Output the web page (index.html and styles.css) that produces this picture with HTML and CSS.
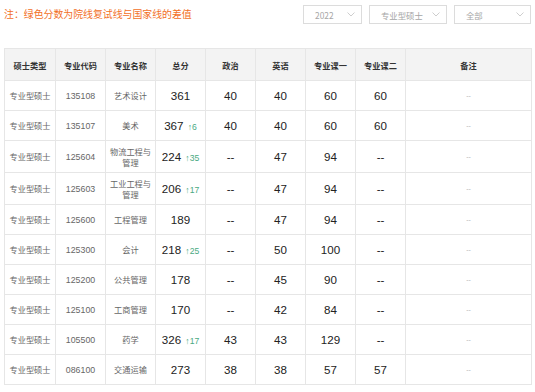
FILE: index.html
```html
<!DOCTYPE html>
<html lang="zh-CN">
<head>
  <meta charset="UTF-8" />
  <title>复试分数线</title>
  <link rel="stylesheet" href="styles.css">
</head>
<body>
  <div class="page">
    <div class="toolbar">
      <p class="note">注：绿色分数为院线复试线与国家线的差值</p>
      <div class="filters">
        <div class="select select-year">
          <span>2022</span>
          <svg class="arrow" width="8" height="5" viewBox="0 0 8 5"><polyline points="0.5,0.5 4,4 7.5,0.5" fill="none" stroke="#c8c8c8" stroke-width="0.9"/></svg>
        </div>
        <div class="select select-type">
          <span>专业型硕士</span>
          <svg class="arrow" width="8" height="5" viewBox="0 0 8 5"><polyline points="0.5,0.5 4,4 7.5,0.5" fill="none" stroke="#c8c8c8" stroke-width="0.9"/></svg>
        </div>
        <div class="select select-all">
          <span>全部</span>
          <svg class="arrow" width="8" height="5" viewBox="0 0 8 5"><polyline points="0.5,0.5 4,4 7.5,0.5" fill="none" stroke="#c8c8c8" stroke-width="0.9"/></svg>
        </div>
      </div>
    </div>

    <table class="score-table">
      <colgroup>
        <col class="c-type"><col><col><col><col><col><col><col><col class="c-remark">
      </colgroup>
      <thead>
        <tr>
          <th>硕士类型</th>
          <th>专业代码</th>
          <th>专业名称</th>
          <th>总分</th>
          <th>政治</th>
          <th>英语</th>
          <th>专业课一</th>
          <th>专业课二</th>
          <th>备注</th>
        </tr>
      </thead>
      <tbody>
        <tr>
          <td class="txt">专业型硕士</td><td class="code">135108</td><td class="txt">艺术设计</td>
          <td class="num">361</td><td class="num">40</td><td class="num">40</td><td class="num">60</td><td class="num">60</td><td class="remark">--</td>
        </tr>
        <tr>
          <td class="txt">专业型硕士</td><td class="code">135107</td><td class="txt">美术</td>
          <td class="num">367 <span class="diff">↑6</span></td><td class="num">40</td><td class="num">40</td><td class="num">60</td><td class="num">60</td><td class="remark">--</td>
        </tr>
        <tr class="tall">
          <td class="txt">专业型硕士</td><td class="code">125604</td><td class="txt">物流工程与管理</td>
          <td class="num">224 <span class="diff">↑35</span></td><td class="num">--</td><td class="num">47</td><td class="num">94</td><td class="num">--</td><td class="remark">--</td>
        </tr>
        <tr class="tall">
          <td class="txt">专业型硕士</td><td class="code">125603</td><td class="txt">工业工程与管理</td>
          <td class="num">206 <span class="diff">↑17</span></td><td class="num">--</td><td class="num">47</td><td class="num">94</td><td class="num">--</td><td class="remark">--</td>
        </tr>
        <tr>
          <td class="txt">专业型硕士</td><td class="code">125600</td><td class="txt">工程管理</td>
          <td class="num">189</td><td class="num">--</td><td class="num">47</td><td class="num">94</td><td class="num">--</td><td class="remark">--</td>
        </tr>
        <tr>
          <td class="txt">专业型硕士</td><td class="code">125300</td><td class="txt">会计</td>
          <td class="num">218 <span class="diff">↑25</span></td><td class="num">--</td><td class="num">50</td><td class="num">100</td><td class="num">--</td><td class="remark">--</td>
        </tr>
        <tr>
          <td class="txt">专业型硕士</td><td class="code">125200</td><td class="txt">公共管理</td>
          <td class="num">178</td><td class="num">--</td><td class="num">45</td><td class="num">90</td><td class="num">--</td><td class="remark">--</td>
        </tr>
        <tr>
          <td class="txt">专业型硕士</td><td class="code">125100</td><td class="txt">工商管理</td>
          <td class="num">170</td><td class="num">--</td><td class="num">42</td><td class="num">84</td><td class="num">--</td><td class="remark">--</td>
        </tr>
        <tr>
          <td class="txt">专业型硕士</td><td class="code">105500</td><td class="txt">药学</td>
          <td class="num">326 <span class="diff">↑17</span></td><td class="num">43</td><td class="num">43</td><td class="num">129</td><td class="num">--</td><td class="remark">--</td>
        </tr>
        <tr>
          <td class="txt">专业型硕士</td><td class="code">086100</td><td class="txt">交通运输</td>
          <td class="num">273</td><td class="num">38</td><td class="num">38</td><td class="num">57</td><td class="num">57</td><td class="remark">--</td>
        </tr>
      </tbody>
    </table>
  </div>
</body>
</html>
```

FILE: styles.css
```css
* {
  box-sizing: border-box;
  margin: 0;
  padding: 0;
}

body {
  background: #fff;
  font-family: "Liberation Sans", "Noto Sans CJK SC", sans-serif;
  color: #333;
}

.page {
  padding: 5px 4px 0 4px;
}

.toolbar {
  display: flex;
  justify-content: space-between;
  align-items: center;
  height: 19px;
}

.note {
  font-family: "Noto Sans CJK SC", sans-serif;
  font-size: 9.9px;
  color: #f2701f;
  line-height: 19px;
}

.filters {
  display: flex;
  gap: 7px;
}

.select {
  display: flex;
  justify-content: space-between;
  align-items: center;
  height: 19px;
  padding: 0 6px 0 11px;
  border: 1px solid #dcdcdc;
  font-family: "Noto Sans CJK SC", sans-serif;
  font-size: 8.4px;
  color: #a6a6a6;
}

.select-year { width: 59px; }
.select-type { width: 78px; }
.select-all { width: 77px; }

.arrow {
  display: block;
}

/* table */
.score-table {
  margin-top: 24px;
  width: 527px;
  border-collapse: collapse;
  table-layout: fixed;
  border: 1px solid #e6e6e6;
}

.score-table col { width: 50px; }
.score-table col.c-type { width: 51px; }
.score-table col.c-remark { width: 126px; }

.score-table th,
.score-table td {
  border: 1px solid #e6e6e6;
  text-align: center;
  vertical-align: middle;
  padding: 0 3px;
}

.score-table th {
  height: 32px;
  background: #f3f3f3;
  font-family: "Noto Sans CJK SC", sans-serif;
  font-size: 8.2px;
  font-weight: bold;
  color: #333;
}

.score-table td {
  height: 30px;
}

.score-table tr.tall td {
  height: 32px;
}

.txt {
  font-family: "Noto Sans CJK SC", sans-serif;
  font-size: 8.2px;
  line-height: 11px;
  color: #666;
}

.code {
  font-size: 8.8px;
  color: #666;
}

.num {
  font-size: 11.6px;
  color: #222;
}

.diff {
  font-size: 8.6px;
  color: #4aa982;
  margin-left: 1px;
}

.remark {
  font-size: 7px;
  color: #b5b5b5;
}
```
